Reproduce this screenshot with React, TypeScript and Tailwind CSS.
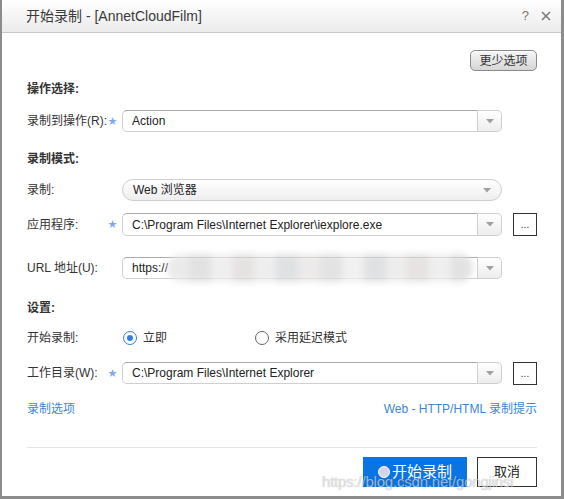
import React from "react";

const FONT = '"Liberation Sans", Arial, "Noto Sans CJK SC", sans-serif';

function Star() {
  return <span className="text-[9px] leading-none text-[#7fa9e8]">★</span>;
}

function Arrow() {
  return (
    <svg width="8" height="5" viewBox="0 0 8 5">
      <path d="M0 0 L8 0 L4 4.5 Z" fill="#a0a0a0" />
    </svg>
  );
}

function Label({ text, star }: { text: string; star?: boolean }) {
  return (
    <div className="w-[95px] shrink-0 flex items-center justify-between pr-[5px] text-[12px] text-[#333]">
      <span>{text}</span>
      {star ? <Star /> : null}
    </div>
  );
}

function ComboBox({ value, children }: { value?: string; children?: React.ReactNode }) {
  return (
    <div className="flex w-[380px] shrink-0 h-full">
      <div className="relative flex-1 flex items-center pl-[9px] border border-[#cfcfcf] border-t-[#a9a9a9] rounded-l-[5px] bg-white text-[12px] text-[#222] overflow-visible">
        {value}
        {children}
      </div>
      <div className="w-[24px] flex items-center justify-center border border-l-0 border-[#cfcfcf] rounded-r-[5px] bg-gradient-to-b from-white to-[#ededed]">
        <Arrow />
      </div>
    </div>
  );
}

function DotsButton() {
  return (
    <div className="ml-[11px] w-[24px] h-[23px] border border-[#333] bg-white flex items-end justify-center pb-[5px] text-[10px] leading-none text-[#333]">
      ...
    </div>
  );
}

export default function App() {
  return (
    <div
      className="w-[564px] h-[499px] bg-[#8c8c8c] pl-[2px] pr-[3px] pb-[3px] pt-0 overflow-hidden"
      style={{ fontFamily: FONT }}
    >
      <div className="relative w-full h-full bg-white flex flex-col">
        {/* Title bar */}
        <div className="h-[33px] shrink-0 flex items-center justify-between pl-[24px] pr-[10px] border-b border-[#c9c9c9] bg-gradient-to-b from-white to-[#ebebeb]">
          <span className="text-[14px] text-[#3a3a3a]">开始录制 - [AnnetCloudFilm]</span>
          <div className="flex items-center gap-[12px] text-[#777]">
            <span className="text-[13px]">?</span>
            <svg width="10" height="10" viewBox="0 0 10 10">
              <path d="M1 1 L9 9 M9 1 L1 9" stroke="#777" strokeWidth="1.5" />
            </svg>
          </div>
        </div>

        <div className="flex flex-col pl-[25px] pr-[24px]">
          <div className="mt-[17px] flex justify-end">
            <div className="h-[21px] w-[67px] rounded-[5px] border border-[#8a8a8a] bg-gradient-to-b from-[#f6f6f6] to-[#d6d6d6] flex items-center justify-center text-[12px] text-[#333] shadow-[inset_0_1px_0_#fff]">
              更少选项
            </div>
          </div>

          <div className="mt-[10px] h-[16px] flex items-center text-[12px] font-bold text-[#333]">操作选择:</div>

          <div className="mt-[13px] h-[22px] flex items-stretch">
            <Label text="录制到操作(R):" star />
            <ComboBox value="Action" />
          </div>

          <div className="mt-[19px] h-[16px] flex items-center text-[12px] font-bold text-[#333]">录制模式:</div>

          <div className="mt-[12px] h-[22px] flex items-stretch">
            <Label text="录制:" />
            <div className="w-[380px] flex items-center justify-between pl-[10px] pr-[10px] rounded-full border border-[#cfcfcf] bg-gradient-to-b from-white to-[#eeeeee] text-[12px] text-[#222]">
              <span>Web 浏览器</span>
              <Arrow />
            </div>
          </div>

          <div className="mt-[12px] h-[23px] flex items-stretch">
            <Label text="应用程序:" star />
            <ComboBox value={"C:\\Program Files\\Internet Explorer\\iexplore.exe"} />
            <DotsButton />
          </div>

          <div className="mt-[21px] h-[22px] flex items-stretch">
            <Label text="URL 地址(U):" />
            <ComboBox value="https://">
              <div className="absolute left-[44px] top-[-4px] w-[306px] h-[28px] flex rounded-full overflow-hidden blur-[3px] opacity-80">
                <div className="flex-1 bg-[#e6e6e6]" />
                <div className="flex-1 bg-[#dcdcdc]" />
                <div className="flex-1 bg-[#ececec]" />
                <div className="flex-1 bg-[#dfdcdb]" />
                <div className="flex-1 bg-[#eaeaea]" />
                <div className="flex-1 bg-[#d8dadc]" />
                <div className="flex-1 bg-[#e8e6e5]" />
                <div className="flex-1 bg-[#dddddd]" />
                <div className="flex-1 bg-[#eeeeee]" />
                <div className="flex-1 bg-[#d9dadc]" />
                <div className="flex-1 bg-[#e9e9e9]" />
                <div className="flex-1 bg-[#e0dddc]" />
                <div className="flex-1 bg-[#ececec]" />
                <div className="flex-1 bg-[#dcdcdc]" />
              </div>
            </ComboBox>
          </div>

          <div className="mt-[21px] h-[16px] flex items-center text-[12px] font-bold text-[#333]">设置:</div>

          <div className="mt-[12px] h-[20px] flex items-center text-[12px] text-[#333]">
            <Label text="开始录制:" />
            <div className="w-[133px] flex items-center pl-[1px]">
              <div className="w-[14px] h-[14px] rounded-full border border-[#2f7fe0] flex items-center justify-center">
                <div className="w-[6px] h-[6px] rounded-full bg-[#2f7fe0]" />
              </div>
              <span className="ml-[6px]">立即</span>
            </div>
            <div className="flex items-center">
              <div className="w-[14px] h-[14px] rounded-full border border-[#666]" />
              <span className="ml-[6px]">采用延迟模式</span>
            </div>
          </div>

          <div className="mt-[14px] h-[22px] flex items-stretch">
            <Label text="工作目录(W):" star />
            <ComboBox value={"C:\\Program Files\\Internet Explorer"} />
            <DotsButton />
          </div>

          <div className="mt-[17px] h-[16px] flex items-center justify-between text-[12px] text-[#3d85d9]">
            <span>录制选项</span>
            <span>Web - HTTP/HTML 录制提示</span>
          </div>

          <div className="mt-[30px] h-[1px] bg-[#e3e3e3]" />

          <div className="mt-[9px] flex justify-end gap-[10px]">
            <div className="w-[104px] h-[30px] bg-[#0a74e3] flex items-center justify-center text-[15px] text-white">
              <div className="w-[12px] h-[12px] rounded-full border-[1.5px] border-white bg-[#cfd8e6] mr-[2px]" />
              开始录制
            </div>
            <div className="w-[60px] h-[30px] border border-[#333] bg-white flex items-center justify-center text-[13px] text-[#222]">
              取消
            </div>
          </div>
        </div>

        <div
          className="absolute left-[320px] top-[471px] text-[15px] tracking-[-0.2px] text-white/60 pointer-events-none"
          style={{ textShadow: "0 0 1px rgba(0,0,0,0.35)" }}
        >
          https://blog.csdn.net/gongjinsi
        </div>
      </div>
    </div>
  );
}
